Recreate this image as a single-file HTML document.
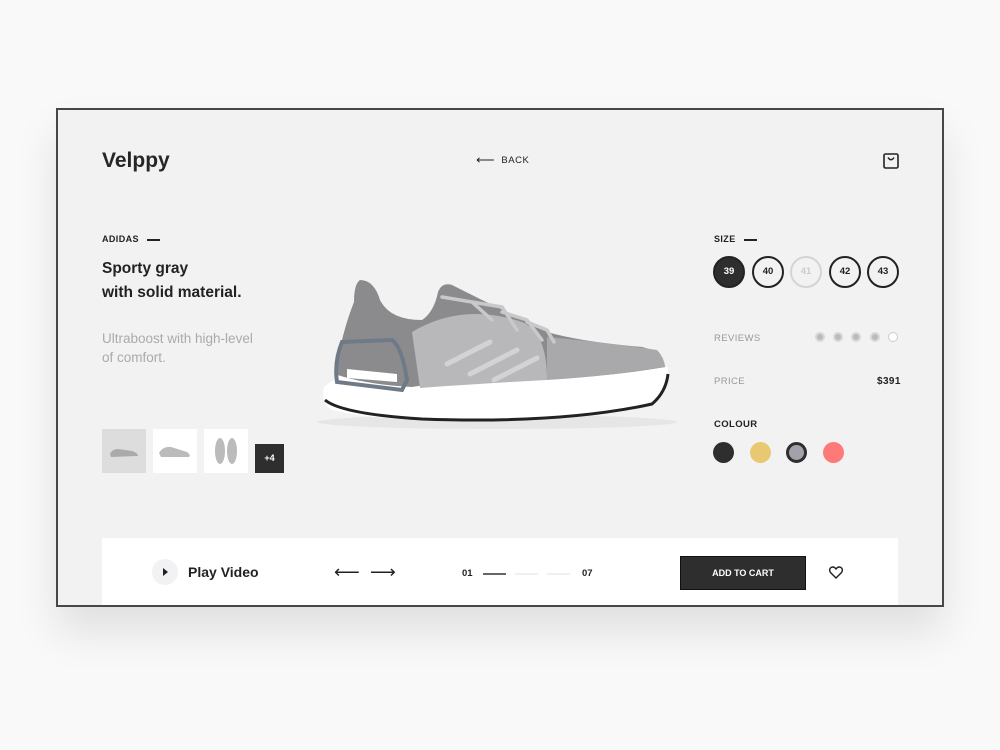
<!DOCTYPE html>
<html><head><meta charset="utf-8"><style>
*{margin:0;padding:0;box-sizing:border-box}
body{width:1000px;height:750px;background:#f9f9f9;font-family:"Liberation Sans",sans-serif;color:#222;position:relative;overflow:hidden}
.frame{position:absolute;left:56px;top:108px;width:888px;height:499px;border:2px solid #474747;background:#f2f2f2;box-shadow:0 25px 40px rgba(0,0,0,0.10);overflow:hidden}
.a{position:absolute}
.logo{left:44px;top:39px;font-size:21px;font-weight:bold;color:#262626}
.back{left:418px;top:41px;font-size:9.5px;letter-spacing:.5px;color:#222}
.lbl{font-size:9px;font-weight:bold;letter-spacing:.4px;color:#222}
.dash{display:inline-block;width:13px;height:2px;background:#222;vertical-align:middle;margin-left:8px}
.title{left:44px;top:147px;font-size:15.5px;font-weight:bold;line-height:24px;color:#222}
.desc{left:44px;top:219px;font-size:13.5px;line-height:19px;color:#aaa}
.thumb{top:319px;width:44px;height:44px;background:#fff}
.size{top:146px;width:32px;height:32px;border-radius:50%;border:2px solid #222;font-size:9.5px;font-weight:bold;text-align:center;line-height:28px}
.grey{font-size:9.5px;letter-spacing:.4px;color:#999}
.dot{top:222px;width:10px;height:10px;border-radius:50%;background:#bbb;border:2px solid #d8d8d8}
.col{top:332px;width:21px;height:21px;border-radius:50%}
.bar{left:44px;top:428px;width:796px;height:70px;background:#fff}
</style></head><body>
<div class="frame">
<div class="a logo">Velppy</div>
<div class="a back"><span style="font-size:13px;position:relative;top:1px">⟵</span>&nbsp; BACK</div>
<svg class="a" style="left:825px;top:43px" width="16" height="16" viewBox="0 0 16 16"><rect x="1" y="1" width="14" height="14" rx="1.5" fill="none" stroke="#222" stroke-width="1.6"/><path d="M5 4.5 Q8 9 11 4.5" fill="none" stroke="#222" stroke-width="1.5"/></svg>
<div class="a lbl" style="left:44px;top:124px">ADIDAS<span class="dash"></span></div>
<div class="a title">Sporty gray<br>with solid material.</div>
<div class="a desc">Ultraboost with high-level<br>of comfort.</div>
<div class="a thumb" style="left:44px;background:#ddd"><svg width="44" height="44"><path d="M8 25 Q10 20 16 20 L30 22 Q36 24 36 27 L9 28Z" fill="#aaa"/></svg></div>
<div class="a thumb" style="left:95px"><svg width="44" height="44"><path d="M6 24 Q10 17 18 18 L34 23 Q38 26 36 28 L8 28Z" fill="#bbb"/></svg></div>
<div class="a thumb" style="left:146px"><svg width="44" height="44"><ellipse cx="16" cy="22" rx="5" ry="13" fill="#bbb"/><ellipse cx="28" cy="22" rx="5" ry="13" fill="#bbb"/></svg></div>
<div class="a" style="left:197px;top:334px;width:29px;height:29px;background:#2e2e2e;color:#fff;font-size:9px;font-weight:bold;text-align:center;line-height:29px">+4</div>
<svg class="a" style="left:0;top:0" width="888" height="499" viewBox="56 108 888 499">
<ellipse cx="495" cy="420" rx="180" ry="7" fill="#e6e6e6"/>
<path d="M322 385 Q318 400 330 408 Q380 420 470 418 Q600 415 650 400 Q665 393 666 365 L640 368 Q560 378 450 378 L340 372Z" fill="#fff"/>
<path d="M323 398 Q340 412 420 417 Q560 422 650 402 Q664 390 666 372" fill="none" stroke="#222" stroke-width="3"/>
<path d="M333 372 Q340 330 352 300 Q352 282 358 278 Q372 278 378 298 Q388 318 420 318 Q432 310 436 290 Q440 280 450 283 L480 298 Q510 312 545 330 Q580 340 640 345 Q662 350 663 365 Q600 376 520 378 Q440 380 410 385 Q360 382 333 372Z" fill="#8b8b8e"/>
<path d="M410 330 Q460 300 520 320 Q545 330 545 378 Q470 382 418 386Z" fill="#b8b8bb"/>
<path d="M545 335 Q600 340 655 348 Q662 355 663 365 Q600 375 545 378Z" fill="#a9a9ac"/>
<path d="M340 340 L390 338 Q400 345 405 378 L400 388 L335 380 Q332 360 340 340Z" fill="none" stroke="#6f7a88" stroke-width="4"/>
<path d="M345 367 L395 372 L395 380 L345 376Z" fill="#fff"/>
<g stroke="#d3d3d6" stroke-width="5" stroke-linecap="round"><line x1="445" y1="362" x2="488" y2="340"/><line x1="468" y1="372" x2="515" y2="348"/><line x1="492" y1="378" x2="535" y2="356"/></g>
<g stroke="#c9c9cc" stroke-width="3.5" stroke-linecap="round" fill="none"><path d="M440 295 L470 300 L490 318"/><path d="M470 300 L500 305 L515 328"/><path d="M500 310 L525 318 L540 338"/><path d="M525 320 L545 328 L552 340"/></g>
</svg>
<div class="a lbl" style="left:656px;top:124px">SIZE<span class="dash"></span></div>
<div class="a size" style="left:655px;background:#2e2e2e;color:#fff">39</div>
<div class="a size" style="left:694px">40</div>
<div class="a size" style="left:732px;border-color:#d4d4d4;color:#ccc">41</div>
<div class="a size" style="left:771px">42</div>
<div class="a size" style="left:809px">43</div>
<div class="a grey" style="left:656px;top:223px">REVIEWS</div>
<div class="a dot" style="left:757px"></div><div class="a dot" style="left:775px"></div><div class="a dot" style="left:793px"></div><div class="a dot" style="left:812px"></div>
<div class="a dot" style="left:830px;background:#fff;border:1px solid #ccc"></div>
<div class="a grey" style="left:656px;top:266px">PRICE</div>
<div class="a lbl" style="left:819px;top:266px;font-size:10px">$391</div>
<div class="a lbl" style="left:656px;top:309px;font-size:9.5px">COLOUR</div>
<div class="a col" style="left:655px;background:#2e2e2e"></div>
<div class="a col" style="left:692px;background:#e9c872"></div>
<div class="a col" style="left:728px;background:#a3a2ac;border:3px solid #2e2e2e"></div>
<div class="a col" style="left:765px;background:#fd7a78"></div>
<div class="a bar">
<div class="a" style="left:50px;top:21px;width:26px;height:26px;border-radius:50%;background:#f2f1f3"></div>
<div class="a" style="left:61px;top:30px;border-left:5px solid #222;border-top:4px solid transparent;border-bottom:4px solid transparent"></div>
<div class="a" style="left:86px;top:26px;font-size:14px;font-weight:bold;color:#222">Play Video</div>
<div class="a" style="left:232px;top:24px;font-size:18px">⟵</div>
<div class="a" style="left:268px;top:24px;font-size:18px">⟶</div>
<div class="a" style="left:360px;top:30px;font-size:9.5px;font-weight:bold">01</div>
<div class="a" style="left:381px;top:35px;width:23px;height:2px;background:#666"></div>
<div class="a" style="left:413px;top:35px;width:23px;height:2px;background:#f0f0f0"></div>
<div class="a" style="left:445px;top:35px;width:23px;height:2px;background:#f0f0f0"></div>
<div class="a" style="left:480px;top:30px;font-size:9.5px;font-weight:bold">07</div>
<div class="a" style="left:578px;top:18px;width:126px;height:34px;background:#2e2e2e;border:1px solid #111;color:#fff;font-size:9px;font-weight:bold;text-align:center;line-height:32px">ADD TO CART</div>
<svg class="a" style="left:727px;top:28px" width="14" height="13" viewBox="0 0 14 13"><path d="M7 12 L1.5 6.5 Q-0.5 3.5 2 1.5 Q5 0 7 3 Q9 0 12 1.5 Q14.5 3.5 12.5 6.5Z" fill="none" stroke="#222" stroke-width="1.4"/></svg>
</div>
</div>
</body></html>
